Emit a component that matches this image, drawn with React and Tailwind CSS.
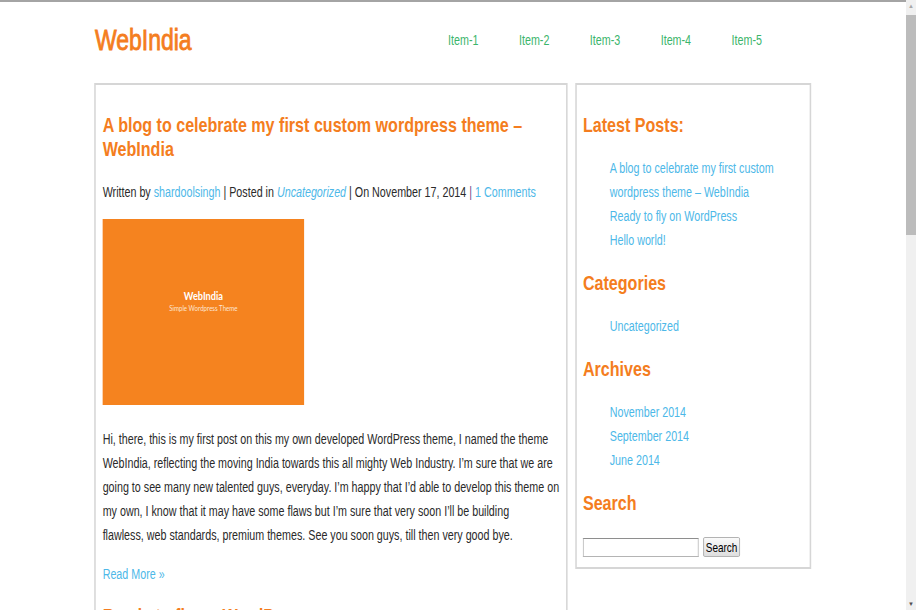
import React from 'react';

// the shot is squeezed horizontally, so the page is laid out wide and scaled on x
const font = { fontFamily: '"Liberation Sans", Arial, sans-serif' };

const navItems = ['Item-1', 'Item-2', 'Item-3', 'Item-4', 'Item-5'];

const latestPosts = [
  'A blog to celebrate my first custom wordpress theme – WebIndia',
  'Ready to fly on WordPress',
  'Hello world!',
];

const archives = ['November 2014', 'September 2014', 'June 2014'];

function Widget({ title, children }) {
  return (
    <div className="mb-[19px]">
      <h3 className="text-[21px] font-bold leading-[24px] text-[#f47d20]">{title}</h3>
      <div className="mt-[19px]">{children}</div>
    </div>
  );
}

function LinkList({ items }) {
  return (
    <ul className="pl-[35px]">
      {items.map(item => (
        <li key={item} className="text-[14px] leading-[24px] text-[#4db8e8]">
          {item}
        </li>
      ))}
    </ul>
  );
}

const App = () => {
  return (
    <div className="flex h-[610px] overflow-hidden bg-white" style={font}>
      <div className="relative flex-1 overflow-hidden border-t-2 border-[#a4a4a4]">
        <div className="w-[1184px] origin-top-left scale-x-[0.766]">
          <header className="flex items-center pt-[23px] pl-[124px]">
            <h1 className="w-[461px] text-[30px] leading-[30px] text-[#f47d20] [-webkit-text-stroke:0.9px_#f47d20]">
              WebIndia
            </h1>
            <nav className="flex">
              {navItems.map(item => (
                <a key={item} className="w-[92.5px] text-[14px] leading-[20px] text-[#3bb56b]">
                  {item}
                </a>
              ))}
            </nav>
          </header>

          <div className="mt-[28px] flex items-start gap-[10px] pl-[123px]">
            <main className="w-[618px] border-2 border-[#d6d6d6] px-[9px] pt-[28px] pb-10">
              <article>
                <h2 className="text-[21px] font-bold leading-[24px] text-[#f47d20]">
                  A blog to celebrate my first custom wordpress theme – WebIndia
                </h2>
                <p className="mt-[19px] text-[14px] leading-[24px] text-[#2a2a2a]">
                  Written by <span className="text-[#4db8e8]">shardoolsingh</span> | Posted in{' '}
                  <span className="italic text-[#4db8e8]">Uncategorized</span> | On November 17, 2014{' '}
                  <span className="text-[#6a4a8a]">|</span> <span className="text-[#4db8e8]">1 Comments</span>
                </p>
                <div className="mt-[15px] flex h-[186px] w-[263px] flex-col items-center justify-center bg-[#f5831f] pb-[22px] text-white">
                  <div
                    className="text-[12px] font-bold leading-[14px]"
                    style={{ fontFamily: 'Lato, "Open Sans", sans-serif' }}
                  >
                    WebIndia
                  </div>
                  <div
                    className="text-[8px] leading-[10px] text-[#fde6d2]"
                    style={{ fontFamily: 'Lato, "Open Sans", sans-serif' }}
                  >
                    Simple Wordpress Theme
                  </div>
                </div>
                <p className="mt-[22px] text-[14px] leading-[24px] text-[#2a2a2a]">
                  Hi, there, this is my first post on this my own developed WordPress theme, I named the theme
                  WebIndia, reflecting the moving India towards this all mighty Web Industry. I’m sure that we are
                  going to see many new talented guys, everyday. I’m happy that I’d able to develop this theme on my
                  own, I know that it may have some flaws but I’m sure that very soon I’ll be building
                  <br />
                  flawless, web standards, premium themes. See you soon guys, till then very good bye.
                </p>
                <p className="mt-[15px] text-[14px] leading-[24px] text-[#4db8e8]">Read More »</p>
              </article>
              <article className="mt-[18px]">
                <h2 className="text-[21px] font-bold leading-[24px] text-[#f47d20]">Ready to fly on WordPress</h2>
              </article>
            </main>

            <aside className="w-[308px] border-2 border-[#d6d6d6] px-[8px] pt-[28px] pb-[10px]">
              <Widget title="Latest Posts:">
                <LinkList items={latestPosts} />
              </Widget>
              <Widget title="Categories">
                <LinkList items={['Uncategorized']} />
              </Widget>
              <Widget title="Archives">
                <LinkList items={archives} />
              </Widget>
              <div>
                <h3 className="text-[21px] font-bold leading-[24px] text-[#f47d20]">Search</h3>
                <form className="mt-[22px] flex items-center gap-[6px]">
                  <input
                    type="text"
                    className="h-[19px] w-[151px] border border-[#b4b4b4] border-t-[#8e8e8e] bg-white"
                  />
                  <button
                    type="button"
                    className="h-[20px] w-[48px] rounded-[2px] border border-[#a9a9a9] bg-gradient-to-b from-[#fafafa] to-[#dedede] text-[13px] leading-none text-black"
                  >
                    Search
                  </button>
                </form>
              </div>
            </aside>
          </div>
        </div>
      </div>

      <div className="flex w-[10px] flex-col bg-[#f0f0f0]">
        <div className="flex h-[15px] items-start justify-center pt-[3px] text-[6px] leading-none text-[#a8a8a8]">
          ▲
        </div>
        <div className="h-[220px] bg-[#bcbcbc]" />
        <div className="flex-1" />
        <div className="flex h-[12px] items-end justify-center pb-[3px] text-[6px] leading-none text-[#505050]">
          ▼
        </div>
      </div>
    </div>
  );
};

export default App;
